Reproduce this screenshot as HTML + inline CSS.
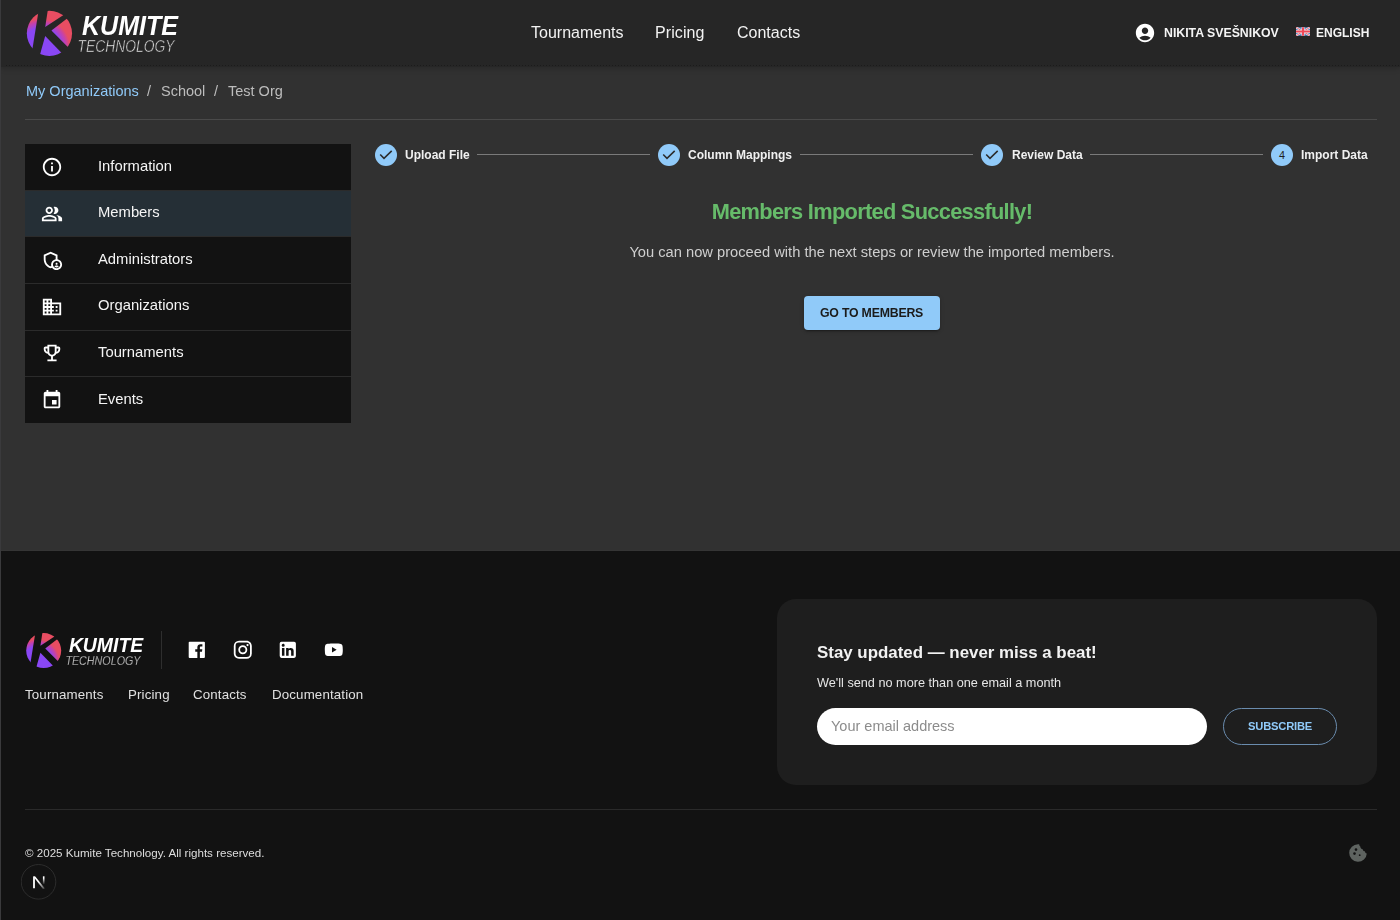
<!DOCTYPE html>
<html><head><meta charset="utf-8">
<style>
*{box-sizing:border-box;margin:0;padding:0}
html,body{width:1400px;height:920px;overflow:hidden;background:#313131;font-family:"Liberation Sans",sans-serif;color:#fff}
.a{position:absolute;white-space:nowrap}
.t{position:absolute;white-space:nowrap;line-height:1;will-change:transform}
#leftcol{position:absolute;left:0;top:0;width:1px;height:920px;background:#3a3a3c;z-index:50}
#header{position:absolute;z-index:10;left:0;top:0;width:1400px;height:67px;background:#262626;box-shadow:0 1px 6px rgba(0,0,0,0.22)}
#header .dots{position:absolute;left:6px;top:65px;width:1394px;height:1px;background-image:linear-gradient(90deg,#1b1b1b 1px,transparent 1px);background-size:3px 1px}
#mainbg{position:absolute;left:0;top:67px;width:1400px;height:484px;background:#313131}
#main{position:absolute;left:0;top:0;width:0;height:0}
#footer{position:absolute;left:0;top:551px;width:1400px;height:369px;background:#121212}
.nav{font-size:16px;color:#f2f2f2}
.sb{position:absolute;left:25px;top:144px;width:326px;height:279px;background:#121212}
.row{position:absolute;left:0;width:326px;height:46.5px}
.row .lbl{position:absolute;will-change:transform;left:72.6px;font-size:14.8px;color:#f5f5f5;line-height:1}
.row svg{position:absolute;left:16px;width:22px;height:22px}
.div{position:absolute;left:0;width:326px;height:1px;background:#2b2b2b}
.steplbl{font-size:12px;font-weight:bold;color:#f0f0f0}
.conn{position:absolute;height:1px;background:#7a7a7a;top:154px}
.bc{font-size:14.5px}
.soc{width:21.6px;height:21.6px}
.fl{font-size:13.3px;letter-spacing:0.15px;color:#e0e0e0}
#foot{position:absolute;left:0;top:0;width:0;height:0}
.stepc{position:absolute;top:144px;width:22px;height:22px}
</style></head><body>
<div id="leftcol"></div>
<div id="header">
  <div class="dots"></div>
  <svg class="a" id="logo" style="left:24px;top:8px;will-change:transform" width="160" height="52" viewBox="0 0 160 52">
    <defs>
      <radialGradient id="lg" gradientUnits="userSpaceOnUse" cx="300" cy="700" r="530">
        <stop offset="0.64" stop-color="#8a47f5"/><stop offset="0.84" stop-color="#c441ad"/><stop offset="0.97" stop-color="#e84d62"/>
      </radialGradient>
      <clipPath id="cc"><circle cx="450" cy="448" r="400"/></clipPath>
    </defs>
    <g clip-path="url(#cc)" fill="url(#lg)" transform="scale(0.05653)">
      <polygon points="266,0 117.7,920 0,920 0,0"/>
      <polygon points="375,335 430,-20 920,-20"/>
      <polygon points="485,400 1000,2 1000,915"/>
      <polygon points="375,495 863,1000 234,1000"/>
    </g>
    <text x="58" y="26.7" font-family="Liberation Sans" font-weight="bold" font-style="italic" font-size="27" fill="#fff" textLength="96" lengthAdjust="spacingAndGlyphs">KUMITE</text>
    <text x="53.5" y="43.75" font-family="Liberation Sans" font-style="italic" font-size="17" fill="#e8e8e8" stroke="#262626" stroke-width="0.55" textLength="97" lengthAdjust="spacingAndGlyphs">TECHNOLOGY</text>
  </svg>
  <div class="t nav" style="left:530.5px;top:24.5px">Tournaments</div>
  <div class="t nav" style="left:654.8px;top:24.5px;letter-spacing:0.1px">Pricing</div>
  <div class="t nav" style="left:737px;top:24.5px">Contacts</div>
  <svg class="a" style="left:1134px;top:21.5px" width="22" height="22" viewBox="0 0 24 24"><path fill="#fff" d="M12 2C6.48 2 2 6.48 2 12s4.48 10 10 10 10-4.48 10-10S17.52 2 12 2zm0 4c1.93 0 3.5 1.57 3.5 3.5S13.93 13 12 13s-3.5-1.57-3.5-3.5S10.07 6 12 6zm0 14c-2.03 0-4.43-.82-6.14-2.88C7.55 15.8 9.68 15 12 15s4.45.8 6.14 2.12C16.43 19.18 14.03 20 12 20z"/></svg>
  <div class="t" style="left:1163.7px;top:27.2px;font-size:12.3px;font-weight:bold;color:#f5f5f5">NIKITA SVEŠNIKOV</div>
  <svg class="a" style="left:1296px;top:27px" width="14" height="9" viewBox="0 0 60 36">
    <rect width="60" height="36" fill="#5b8cc6"/>
    <path d="M0,0 L60,36 M60,0 L0,36" stroke="#e8f0f4" stroke-width="8"/>
    <path d="M0,0 L60,36 M60,0 L0,36" stroke="#ee4a5a" stroke-width="3.5"/>
    <path d="M30,0 V36 M0,18 H60" stroke="#eef2f4" stroke-width="13"/>
    <path d="M30,0 V36 M0,18 H60" stroke="#f04858" stroke-width="9"/>
  </svg>
  <div class="t" style="left:1315.7px;top:26.7px;font-size:12px;font-weight:bold;color:#f5f5f5">ENGLISH</div>
</div>

<div id="mainbg"></div>
<div id="main">
  <div class="t bc" style="left:25.9px;top:83.8px;color:#90caf9">My Organizations</div>
  <div class="t bc" style="left:146.5px;top:83.8px;color:#bdbdbd">/</div>
  <div class="t bc" style="left:161.4px;top:83.8px;color:#bdbdbd">School</div>
  <div class="t bc" style="left:213.5px;top:83.8px;color:#bdbdbd">/</div>
  <div class="t bc" style="left:228px;top:83.8px;color:#bdbdbd">Test Org</div>
  <div class="a" style="left:25px;top:119px;width:1352px;height:1px;background:#4a4a4a"></div>

  <div class="sb">
    <div class="row" style="top:0"><svg style="top:12px" viewBox="0 0 24 24"><path fill="#fff" d="M11 7h2v2h-2zm0 4h2v6h-2zm1-9C6.48 2 2 6.48 2 12s4.48 10 10 10 10-4.48 10-10S17.52 2 12 2zm0 18c-4.41 0-8-3.59-8-8s3.59-8 8-8 8 3.59 8 8-3.59 8-8 8z"/></svg><div class="lbl" style="top:14.5px">Information</div></div>
    <div class="row" style="top:46.5px;height:45.5px;background:#252f36"><svg style="top:12px" viewBox="0 0 24 24"><path fill="#fff" d="M16.67 13.13C18.04 14.06 19 15.32 19 17v3h4v-3c0-2.18-3.57-3.47-6.33-3.87zM15 12c2.21 0 4-1.79 4-4s-1.79-4-4-4c-.47 0-.91.1-1.33.24C14.5 5.27 15 6.58 15 8s-.5 2.73-1.33 3.76c.42.14.86.24 1.33.24zm-6 0c2.21 0 4-1.79 4-4s-1.79-4-4-4-4 1.79-4 4 1.79 4 4 4zm0-6c1.1 0 2 .9 2 2s-.9 2-2 2-2-.9-2-2 .9-2 2-2zm0 7c-2.67 0-8 1.34-8 4v3h16v-3c0-2.66-5.33-4-8-4zm6 5H3v-.99C3.2 16.29 6.3 15 9 15s5.8 1.29 6 2v1z"/></svg><div class="lbl" style="top:14.5px">Members</div></div>
    <div class="row" style="top:93px"><svg style="top:12px" viewBox="0 0 24 24"><path fill="#fff" d="M17 17.25c.62 0 1.12-.51 1.12-1.12S17.61 15 17 15s-1.12.51-1.12 1.12.5 1.13 1.12 1.13zm0 .75c-.73 0-2.19.36-2.24 1.08.5.71 1.32 1.17 2.240 1.17s1.74-.46 2.24-1.17c-.05-.72-1.51-1.08-2.24-1.08z"/><path fill="#fff" d="M18 11.09V6.27L10.5 3 3 6.27v4.91c0 4.54 3.2 8.79 7.5 9.82.55-.13 1.08-.32 1.6-.55C13.18 21.99 14.97 23 17 23c3.31 0 6-2.69 6-6 0-2.97-2.16-5.43-5-5.910zM11 17c0 .56.08 1.11.23 1.620-.24.11-.48.22-.73.3-3.17-1-5.5-4.24-5.5-7.74v-3.6l5.5-2.4 5.5 2.4v3.51c-2.84.48-5 2.94-5 5.91zm6 4c-2.21 0-4-1.79-4-4s1.79-4 4-4 4 1.79 4 4-1.79 4-4 4z"/></svg><div class="lbl" style="top:14.5px">Administrators</div></div>
    <div class="div" style="top:46px"></div>
    <div class="div" style="top:91.7px"></div>
    <div class="div" style="top:139px"></div>
    <div class="row" style="top:139.5px"><svg style="top:12px" viewBox="0 0 24 24"><path fill="#fff" d="M12 7V3H2v18h20V7H12zM6 19H4v-2h2v2zm0-4H4v-2h2v2zm0-4H4V9h2v2zm0-4H4V5h2v2zm4 12H8v-2h2v2zm0-4H8v-2h2v2zm0-4H8V9h2v2zm0-4H8V5h2v2zm10 12h-8v-2h2v-2h-2v-2h2v-2h-2V9h8v10zm-2-8h-2v2h2v-2zm0 4h-2v2h2v-2z"/></svg><div class="lbl" style="top:14.5px">Organizations</div></div>
    <div class="div" style="top:185.5px"></div>
    <div class="row" style="top:186px"><svg style="top:12px" viewBox="0 0 24 24"><path fill="#fff" d="M19 5h-2V3H7v2H5c-1.1 0-2 .9-2 2v1c0 2.55 1.92 4.63 4.39 4.94.63 1.5 1.98 2.63 3.61 2.96V19H7v2h10v-2h-4v-3.1c1.63-.33 2.98-1.46 3.61-2.96C19.08 12.63 21 10.55 21 8V7c0-1.1-.9-2-2-2zM5 8V7h2v3.82C5.84 10.4 5 9.3 5 8zm7 6c-1.65 0-3-1.35-3-3V5h6v6c0 1.65-1.35 3-3 3zm7-6c0 1.3-.84 2.4-2 2.82V7h2v1z"/></svg><div class="lbl" style="top:14.5px">Tournaments</div></div>
    <div class="div" style="top:232px"></div>
    <div class="row" style="top:233.2px"><svg style="top:12px" viewBox="0 0 24 24"><path fill="#fff" d="M17 12h-5v5h5v-5zM16 1v2H8V1H6v2H5c-1.11 0-1.99.9-1.99 2L3 19c0 1.1.89 2 2 2h14c1.1 0 2-.9 2-2V5c0-1.1-.9-2-2-2h-1V1h-2zm3 18H5V8h14v11z"/></svg><div class="lbl" style="top:14.5px">Events</div></div>
  </div>

  <!-- stepper -->
  <svg class="stepc" style="left:375px" viewBox="0 0 22 22"><circle cx="11" cy="11" r="11" fill="#90caf9"/><path d="M5.2 10.5 L9 14.4 L16.7 6.9" fill="none" stroke="#2c2c2c" stroke-width="1.55"/></svg>
  <div class="t steplbl" style="left:404.5px;top:148.5px">Upload File</div>
  <div class="conn" style="left:477px;width:173px"></div>
  <svg class="stepc" style="left:658px" viewBox="0 0 22 22"><circle cx="11" cy="11" r="11" fill="#90caf9"/><path d="M5.2 10.5 L9 14.4 L16.7 6.9" fill="none" stroke="#2c2c2c" stroke-width="1.55"/></svg>
  <div class="t steplbl" style="left:688px;top:148.5px">Column Mappings</div>
  <div class="conn" style="left:800px;width:173px"></div>
  <svg class="stepc" style="left:981px" viewBox="0 0 22 22"><circle cx="11" cy="11" r="11" fill="#90caf9"/><path d="M5.2 10.5 L9 14.4 L16.7 6.9" fill="none" stroke="#2c2c2c" stroke-width="1.55"/></svg>
  <div class="t steplbl" style="left:1011.5px;top:148.5px">Review Data</div>
  <div class="conn" style="left:1090px;width:173px"></div>
  <svg class="stepc" style="left:1271px" viewBox="0 0 22 22"><circle cx="11" cy="11" r="11" fill="#90caf9"/><text x="11" y="14.8" text-anchor="middle" font-family="Liberation Sans" font-size="10.8" fill="#1f1f1f">4</text></svg>
  <div class="t steplbl" style="left:1301px;top:148.5px">Import Data</div>

  <div class="t" style="left:0;width:1744px;text-align:center;top:200.8px;font-size:21.8px;letter-spacing:-0.7px;font-weight:bold;color:#66bb6a">Members Imported Successfully!</div>
  <div class="t" style="left:0;width:1744px;text-align:center;top:244.5px;font-size:14.7px;color:#cfcfcf">You can now proceed with the next steps or review the imported members.</div>
  <div class="a" style="left:804px;top:296px;width:136px;height:34px;background:#90caf9;border-radius:4px;box-shadow:0 3px 1px -2px rgba(0,0,0,.2),0 2px 2px 0 rgba(0,0,0,.14),0 1px 5px 0 rgba(0,0,0,.12)"></div>
  <div class="t" style="left:820.4px;top:306.8px;font-size:12.3px;font-weight:bold;color:#1b1b1b;letter-spacing:-0.2px">GO TO MEMBERS</div>
</div>

<div id="footer"></div>
<div class="a" style="left:0;top:550px;width:1400px;height:1px;background:#353535"></div>
<div id="foot">
  <svg class="a" style="left:23.8px;top:630.8px;will-change:transform" width="123.84" height="40.25" viewBox="0 0 160 52">
    <defs>
      <radialGradient id="lg2" gradientUnits="userSpaceOnUse" cx="300" cy="700" r="530">
        <stop offset="0.64" stop-color="#8a47f5"/><stop offset="0.84" stop-color="#c441ad"/><stop offset="0.97" stop-color="#e84d62"/>
      </radialGradient>
      <clipPath id="cc2"><circle cx="450" cy="448" r="400"/></clipPath>
    </defs>
    <g clip-path="url(#cc2)" fill="url(#lg2)" transform="scale(0.05653)">
      <polygon points="266,0 117.7,920 0,920 0,0"/>
      <polygon points="375,335 430,-20 920,-20"/>
      <polygon points="485,400 1000,2 1000,915"/>
      <polygon points="375,495 863,1000 234,1000"/>
    </g>
    <text x="58" y="26.7" font-family="Liberation Sans" font-weight="bold" font-style="italic" font-size="27" fill="#fff" textLength="96" lengthAdjust="spacingAndGlyphs">KUMITE</text>
    <text x="53.5" y="43.75" font-family="Liberation Sans" font-style="italic" font-size="17" fill="#e8e8e8" stroke="#121212" stroke-width="0.45" textLength="97" lengthAdjust="spacingAndGlyphs">TECHNOLOGY</text>
  </svg>
  <div class="a" style="left:161px;top:631px;width:1px;height:38px;background:#2e2e2e"></div>
  <svg class="a soc" style="left:186px;top:639px" viewBox="0 0 24 24"><path fill="#fff" d="M20 3H4a1 1 0 0 0-1 1v16a1 1 0 0 0 1 1h8.615v-6.96h-2.338v-2.725h2.338v-2c0-2.325 1.42-3.592 3.5-3.592.699-.002 1.399.034 2.095.107v2.42h-1.435c-1.128 0-1.348.538-1.348 1.325v1.735h2.697l-.35 2.725h-2.348V21H20a1 1 0 0 0 1-1V4a1 1 0 0 0-1-1z"/></svg>
  <svg class="a soc" style="left:232.2px;top:639px" viewBox="0 0 24 24"><path fill="#fff" d="M7.8 2h8.4C19.4 2 22 4.6 22 7.8v8.4a5.8 5.8 0 0 1-5.8 5.8H7.8C4.6 22 2 19.4 2 16.2V7.8A5.8 5.8 0 0 1 7.8 2m-.2 2A3.6 3.6 0 0 0 4 7.6v8.8C4 18.39 5.61 20 7.6 20h8.8a3.6 3.6 0 0 0 3.6-3.6V7.6C20 5.61 18.39 4 16.4 4H7.6m9.65 1.5a1.25 1.25 0 0 1 1.25 1.25A1.25 1.25 0 0 1 17.25 8 1.25 1.25 0 0 1 16 6.75a1.25 1.25 0 0 1 1.25-1.25M12 7a5 5 0 0 1 5 5 5 5 0 0 1-5 5 5 5 0 0 1-5-5 5 5 0 0 1 5-5m0 2a3 3 0 0 0-3 3 3 3 0 0 0 3 3 3 3 0 0 0 3-3 3 3 0 0 0-3-3z"/></svg>
  <svg class="a soc" style="left:277px;top:639px" viewBox="0 0 24 24"><path fill="#fff" d="M19 3a2 2 0 0 1 2 2v14a2 2 0 0 1-2 2H5a2 2 0 0 1-2-2V5a2 2 0 0 1 2-2h14m-.5 15.5v-5.3a3.26 3.26 0 0 0-3.26-3.26c-.85 0-1.84.52-2.32 1.3v-1.11h-2.79v8.37h2.79v-4.93c0-.77.62-1.4 1.39-1.4a1.4 1.4 0 0 1 1.4 1.4v4.93h2.79M6.88 8.56a1.68 1.68 0 0 0 1.68-1.68c0-.93-.75-1.69-1.68-1.69a1.69 1.69 0 0 0-1.69 1.69c0 .93.76 1.68 1.69 1.68m1.39 9.94v-8.37H5.5v8.37h2.77z"/></svg>
  <svg class="a soc" style="left:322.8px;top:639.2px" viewBox="0 0 24 24"><path fill="#fff" d="M10 15l5.19-3L10 9v6m11.56-7.83c.13.47.22 1.1.28 1.9.07.8.1 1.49.1 2.09L22 12c0 2.19-.16 3.8-.44 4.83-.25.9-.83 1.48-1.73 1.73-.47.13-1.33.22-2.650.28-1.3.07-2.49.1-3.59.1L12 19c-4.19 0-6.8-.16-7.830-.44-.9-.25-1.48-.83-1.73-1.73-.13-.47-.22-1.1-.28-1.9-.07-.8-.1-1.49-.1-2.09L2 12c0-2.19.16-3.8.44-4.83.25-.9.83-1.48 1.73-1.73.47-.13 1.33-.22 2.65-.28 1.3-.07 2.49-.1 3.59-.1L12 5c4.19 0 6.8.16 7.83.44.9.25 1.48.83 1.73 1.73z"/></svg>
  <div class="t fl" style="left:25.3px;top:688.3px">Tournaments</div>
  <div class="t fl" style="left:127.7px;top:688.3px">Pricing</div>
  <div class="t fl" style="left:193px;top:688.3px">Contacts</div>
  <div class="t fl" style="left:271.5px;top:688.3px">Documentation</div>

  <div class="a" style="left:777px;top:599px;width:600px;height:186px;background:#1e1e1e;border-radius:19px"></div>
  <div class="t" style="left:817px;top:645.2px;font-size:16.9px;font-weight:bold;color:#f2f2f2">Stay updated — never miss a beat!</div>
  <div class="t" style="left:817px;top:676.5px;font-size:12.7px;color:#e6e6e6">We'll send no more than one email a month</div>
  <div class="a" style="left:817px;top:708px;width:390px;height:37px;background:#fff;border-radius:18.5px"></div>
  <div class="t" style="left:830.8px;top:718.9px;font-size:14.5px;color:#8c8c8c">Your email address</div>
  <div class="a" style="left:1223px;top:708px;width:114px;height:37px;border:1px solid #6a8cae;border-radius:18.5px"></div>
  <div class="t" style="left:1248px;top:720.6px;font-size:11.2px;font-weight:bold;color:#90caf9;letter-spacing:-0.2px">SUBSCRIBE</div>

  <div class="a" style="left:25px;top:809px;width:1352px;height:1px;background:#2a2a2a"></div>
  <div class="t" style="left:25.2px;top:846.7px;font-size:11.6px;color:#dedede">© 2025 Kumite Technology. All rights reserved.</div>
  <svg class="a" style="left:21px;top:864px" width="36" height="36" viewBox="0 0 36 36">
    <defs>
      <linearGradient id="ngd" gradientUnits="userSpaceOnUse" x1="17" y1="18" x2="23.5" y2="25.5"><stop offset="0" stop-color="#fff"/><stop offset="1" stop-color="#fff" stop-opacity="0.15"/></linearGradient>
      <linearGradient id="ngr" gradientUnits="userSpaceOnUse" x1="0" y1="12.5" x2="0" y2="20.5"><stop offset="0.2" stop-color="#fff"/><stop offset="1" stop-color="#fff" stop-opacity="0"/></linearGradient>
    </defs>
    <circle cx="17.5" cy="17.8" r="17.3" fill="#121212" stroke="#343434" stroke-width="0.8"/>
    <path d="M12.1 12.5 H13.9 V24.2 H12.1Z" fill="#fff"/>
    <path d="M12.3 12.5 L14.3 12.5 L23.9 24.5 L22 25 Z" fill="url(#ngd)"/>
    <path d="M21.9 12.3 H23.5 V20.5 H21.9Z" fill="url(#ngr)"/>
  </svg>
  <svg class="a" style="left:1348px;top:843px" width="20" height="20" viewBox="0 0 20 20">
    <path fill="#5e6360" d="M10 1.2 A8.8 8.8 0 1 0 18.8 10.5 C17.6 10.2 17 9.4 16.9 8.3 C15.7 8.2 14.8 7.4 14.7 6.2 C13.3 6 12.3 4.8 12.3 3.4 C11.5 3 11.1 2.1 11.2 1.3 Z"/>
    <circle cx="8" cy="6.6" r="1.3" fill="#121212"/><circle cx="6.5" cy="10.6" r="1.3" fill="#121212"/><circle cx="11.7" cy="12.2" r="0.9" fill="#121212"/>
  </svg>
</div>
</body></html>
